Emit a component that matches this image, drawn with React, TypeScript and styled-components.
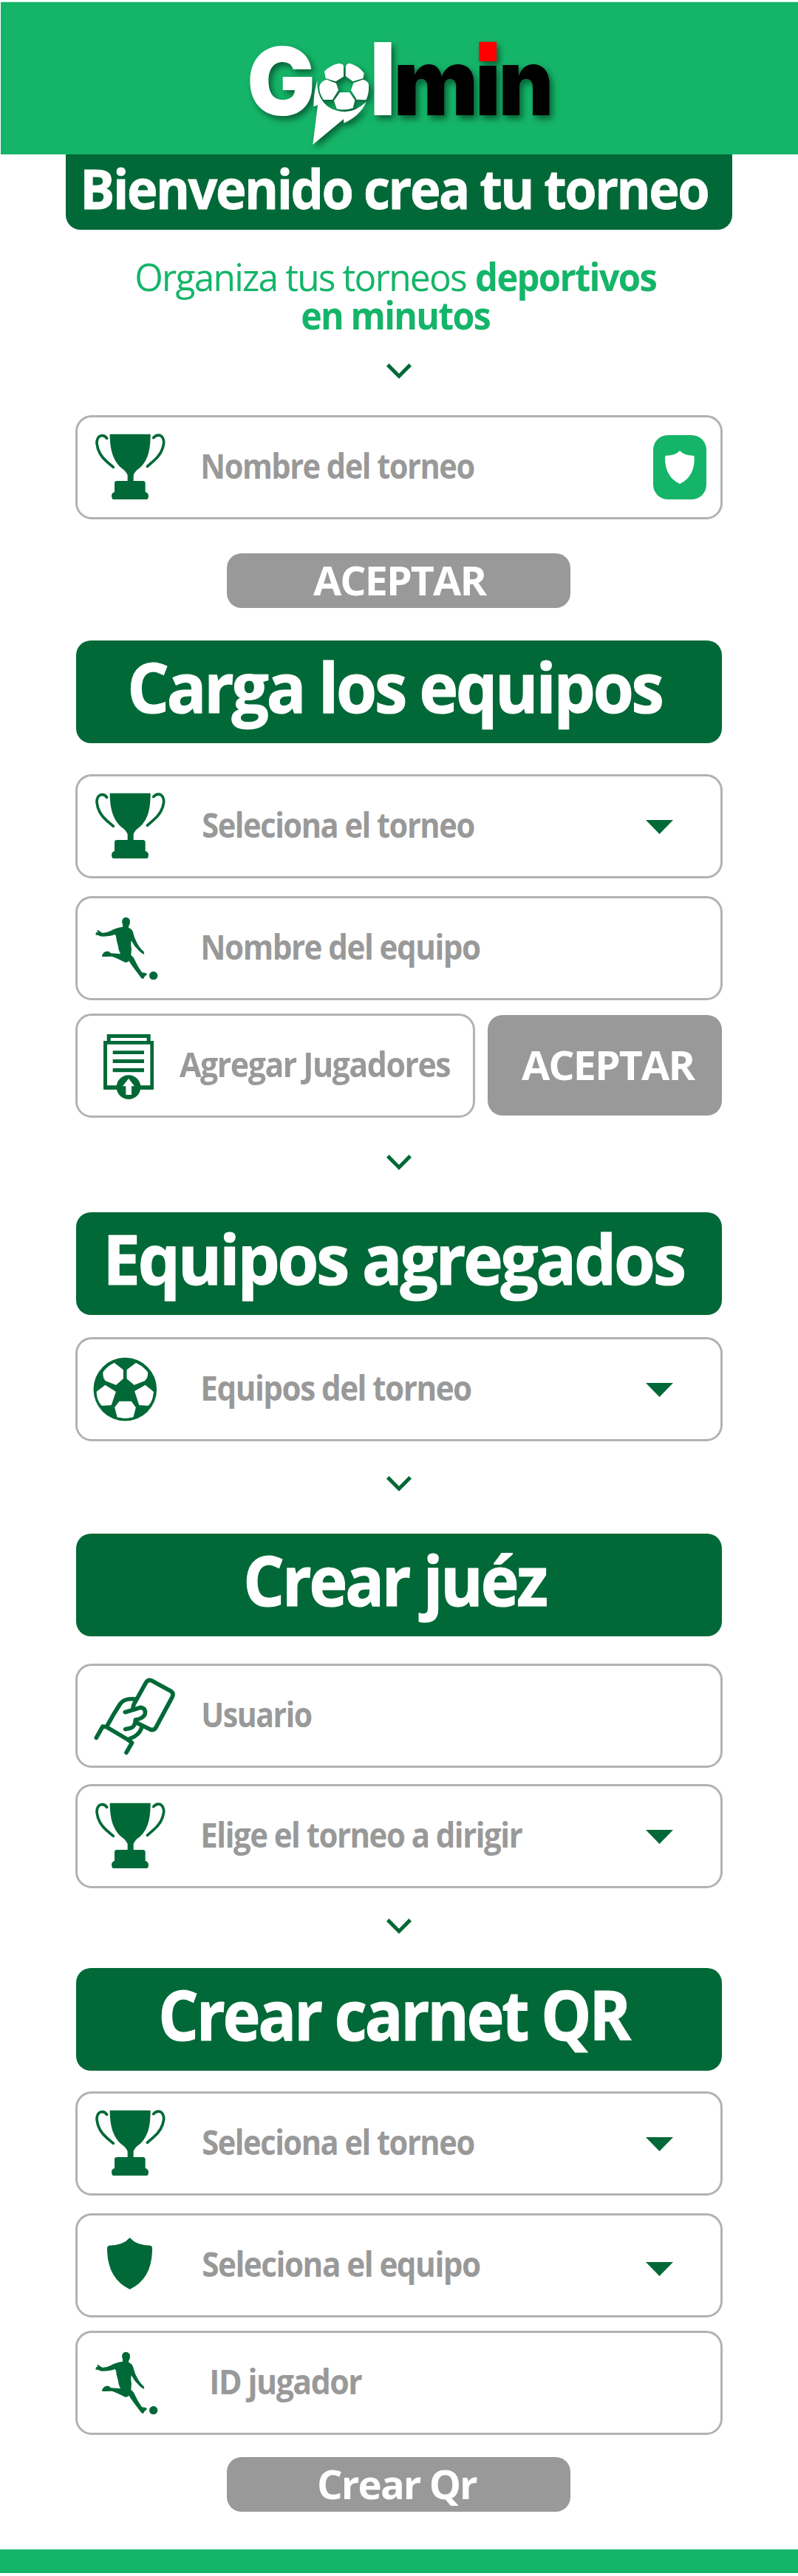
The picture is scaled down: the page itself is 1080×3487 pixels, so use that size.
import React from "react";
import styled, { createGlobalStyle } from "styled-components";

const colors = {
  bright: "#15b569",
  dark: "#006937",
  grey: "#999999",
  line: "#b2b2b2",
};

const GlobalStyle = createGlobalStyle`
  * { box-sizing: border-box; }
  body { margin: 0; background: #fff; }
`;

/* ---------- text fitted to a given ink width ---------- */

const FAMILY = '"Open Sans", "Noto Sans", sans-serif';
const TRACKING = -0.035;
const WORD_GAP = -0.005;

const measure = (text: string, font: string, letter = 0, word = 0) => {
  const ctx = document.createElement("canvas").getContext("2d")!;
  ctx.font = font;
  ctx.letterSpacing = `${letter}px`;
  ctx.wordSpacing = `${word}px`;
  const m = ctx.measureText(text);
  return {
    left: -m.actualBoundingBoxLeft,
    width: m.actualBoundingBoxRight + m.actualBoundingBoxLeft,
    ascent: m.actualBoundingBoxAscent,
    descent: m.actualBoundingBoxDescent,
  };
};

const FitBox = styled.span<{ $w: number; $size: number; $weight: number }>`
  display: block;
  flex: none;
  width: ${(p) => p.$w}px;
  height: ${(p) => p.$size}px;
  line-height: ${(p) => p.$size}px;
  font-family: ${FAMILY};
  font-size: ${(p) => p.$size}px;
  font-weight: ${(p) => p.$weight};
  letter-spacing: ${(p) => p.$size * TRACKING}px;
  word-spacing: ${(p) => p.$size * WORD_GAP}px;
  white-space: nowrap;
`;

const FitInner = styled.span`
  display: inline-block;
  transform-origin: 0 50%;
`;

type FitProps = { w: number; size: number; weight?: number; children: string };

const Fit = ({ w, size, weight = 700, children }: FitProps) => {
  const m = measure(children, `${weight} ${size}px ${FAMILY}`, size * TRACKING, size * WORD_GAP);
  const k = w / m.width;
  return (
    <FitBox $w={w} $size={size} $weight={weight}>
      <FitInner style={{ transform: `translateX(${-m.left * k}px) scaleX(${k})` }}>{children}</FitInner>
    </FitBox>
  );
};

/* ---------- logo ---------- */

const LogoSvg = styled.svg`
  display: block;
  filter: drop-shadow(4px 5px 4px rgba(0, 40, 20, 0.6));
`;

const LOGO_FONT = "Inter, sans-serif";

type LetterProps = {
  x: number;
  y: number;
  w: number;
  h: number;
  fill: string;
  like?: string;
  clip?: string;
  children: string;
};

const Letter = ({ x, y, w, h, fill, like, clip, children }: LetterProps) => {
  const m = measure(like ?? children, `900 200px ${LOGO_FONT}`);
  const sx = w / m.width;
  const sy = h / (m.ascent + m.descent);
  return (
    <g clipPath={clip}>
      <text
        transform={`translate(${x - m.left * sx} ${y + m.ascent * sy}) scale(${sx} ${sy})`}
        fontFamily={LOGO_FONT}
        fontWeight={900}
        fontSize={200}
        fill={fill}
      >
        {children}
      </text>
    </g>
  );
};

const Logo = () => (
  <LogoSvg width={480} height={206} viewBox="0 9 1440 618">
    <defs>
      <clipPath id="stem">
        <rect x="1030" y="258" width="100" height="230" />
      </clipPath>
    </defs>
    <Letter x={111} y={188} w={254} h={285} fill="#fff">G</Letter>
    <g fill="#fff">
      <path d="M385 327 Q370 380 370 433 L387 427 L367 587 L492 484 L493 500 Q560 470 584 413 Q545 452 498 454 Q440 452 410 415 Q382 380 385 327Z" />
      <path d="M414 290 Q440 262 476 257 L487 261 Q492 263 492 270 V311 L460 331 L419 318Z" />
      <path d="M501 269 Q503 259 516 257 Q552 266 575 297 L572 318 L530 331 L500 309Z" />
      <path d="M397 342 Q405 328 423 323 L462 338 L471 366 L447 405 H411 Q392 380 394 352Z" />
      <path d="M522 367 L532 337 L570 323 Q592 328 594 345 Q596 383 583 406 L545 404Z" />
      <path d="M477 375 H516 L538 407 L530 439 Q496 451 464 442 L453 409Z" />
    </g>
    <Letter x={615} y={170} w={72} h={298} fill="#fff">l</Letter>
    <Letter x={711} y={261} w={310} h={207} fill="#000">m</Letter>
    <Letter x={1042} y={266} w={71} h={202} fill="#000" like="ı" clip="url(#stem)">i</Letter>
    <rect x="1042" y="170" width="71" height="79" fill="#f00" />
    <Letter x={1137} y={261} w={191} h={207} fill="#000">n</Letter>
  </LogoSvg>
);

/* ---------- icons, all on the same 130 x 125 canvas ---------- */

const IconSvg = styled.svg.attrs({ width: 130, height: 125, viewBox: "0 0 390 375" })`
  flex: none;
  display: block;
  fill: ${colors.dark};
`;

const Trophy = () => (
  <IconSvg>
    <path d="M86 53 H251 C251 105 245 160 205 192 Q187 204 182 220 V243 H220 Q230 243 230 252 V288 Q243 292 243 304 Q243 315 238 318 H98 Q93 312 93 304 Q93 292 105 288 V252 Q105 243 115 243 H158 V220 Q152 204 135 192 C95 160 86 105 86 53Z" />
    <g fill="none" stroke={colors.dark} strokeWidth="11" strokeLinecap="round">
      <path d="M74 70 Q64 56 48 60 Q33 66 33 90 Q38 135 74 165 L100 187" />
      <path d="M263 68 Q274 54 290 58 Q306 66 305 90 Q300 132 262 163 L238 184" />
    </g>
  </IconSvg>
);

const Player = () => (
  <IconSvg>
    <g transform="translate(0 42)">
      <path d="M135 38 Q136 21 151 20 Q168 21 168 38 Q168 48 163 55 L162 62 Q178 68 181 84 Q188 112 203 136 Q212 150 224 160 L226 171 Q215 168 205 157 Q186 140 173 115 Q170 135 174 147 L172 174 Q182 180 188 195 Q198 218 216 244 L233 247 L237 252 Q226 260 222 270 Q214 270 207 258 L180 222 L163 197 Q158 205 148 203 Q120 188 95 179 Q70 180 54 180 Q55 168 63 162 Q72 157 82 159 L90 166 L129 169 Q121 155 119 135 L113 112 Q112 95 107 90 Q85 98 55 98 Q42 97 38 92 L28 92 L30 82 L38 81 L33 74 L39 72 Q46 80 56 83 Q72 84 88 76 Q110 62 138 59 Q140 52 135 38Z" />
      <circle cx="263" cy="257" r="17" />
    </g>
  </IconSvg>
);

const Sheet = () => (
  <IconSvg>
    <path fillRule="evenodd" d="M74 60 H251 V87 H264 V285 H60 V87 H74Z M89 75 V87 H236 V75Z M75 101 V268 H250 V101Z" />
    <path d="M98 127 H225 V141 H98Z M98 162 H225 V177 H98Z M98 198 H225 V214 H98Z" />
    <circle cx="162" cy="275" r="49" />
    <path fill="#fff" d="M162 240 L186 271 H174 V306 H151 V271 H138Z" />
  </IconSvg>
);

const Ball = () => (
  <IconSvg>
    <circle cx="148" cy="188" r="128.5" />
    <g fill="#fff" stroke="#fff" strokeWidth="3" strokeLinejoin="round">
      <path d="M104 82 L139 109 V145 L111 169 L68 152 Q58 140 60 118 Q75 95 104 82Z" />
      <path d="M192 82 L156 109 V145 L185 169 L228 152 Q240 140 239 118 Q220 94 192 82Z" />
      <path d="M67 172 L109 198 L91 251 L53 253 Q35 235 33 198Z" />
      <path d="M230 172 L188 196 L206 251 L242 253 Q260 235 262 198Z" />
      <path d="M125 238 H173 L190 262 L180 300 Q148 309 117 300 L107 261Z" />
    </g>
  </IconSvg>
);

const RefereeHand = () => (
  <IconSvg>
    <g fill="none" stroke={colors.dark} strokeWidth="17" strokeLinecap="round" strokeLinejoin="round">
      <path d="M180 153 Q182 140 192 126 L233 52 Q242 39 256 45 L334 88 Q347 96 339 112 L273 235 Q265 249 250 243 L192 215" />
      <path d="M190 120 Q145 115 128 139 Q102 178 76 227" />
      <path d="M31 277 L57 231 L72 233 L158 284 L176 297 L153 337" />
      <path d="M148 173 L212 154 Q233 158 229 180 Q223 199 190 204 Q189 232 170 238 L149 242" />
      <path d="M216 234 Q205 268 168 280" />
    </g>
  </IconSvg>
);

const SHIELD = "M92 0 Q118 31 176 32 Q183 33 183 44 Q184 166 92 210 Q0 166 0 44 Q0 33 8 32 Q66 31 92 0Z";

const Shield = () => (
  <IconSvg>
    <path transform="translate(75 75)" d={SHIELD} />
  </IconSvg>
);

const icons = { trophy: Trophy, player: Player, sheet: Sheet, ball: Ball, hand: RefereeHand, shield: Shield };

/* ---------- layout ---------- */

const Page = styled.main`
  width: 1080px;
  height: 3487px;
  padding-top: 2px;
  display: flex;
  flex-direction: column;
  align-items: center;
  background: #fff;
`;

const TopBar = styled.header`
  width: 1079px;
  height: 207px;
  flex: none;
  align-self: flex-end;
  display: flex;
  justify-content: center;
  border-top: 1px solid #c4ebd7;
  background: ${colors.bright};
`;

const Welcome = styled.h1`
  width: 902px;
  height: 102px;
  flex: none;
  margin: 0;
  padding: 0 8px 11px 0;
  display: flex;
  align-items: center;
  justify-content: center;
  border-radius: 0 0 20px 20px;
  background: ${colors.dark};
  color: #fff;
  -webkit-text-stroke: 0.8px #fff;
`;

const Tagline = styled.div`
  width: 711px;
  margin-top: 37px;
  padding-right: 8px;
  display: flex;
  flex-wrap: wrap;
  justify-content: center;
  gap: 0 14px;
  color: ${colors.bright};
`;

const ChevronSvg = styled.svg<{ $mt: number }>`
  flex: none;
  display: block;
  margin-top: ${(p) => p.$mt}px;
  fill: ${colors.dark};
`;

const Chevron = ({ mt }: { mt: number }) => (
  <ChevronSvg $mt={mt} width={34} height={21} viewBox="0 0 34 21">
    <path d="M3.5 0 L17 13.7 L30.5 0 L34 3.7 L17 20.7 L0 3.7Z" />
  </ChevronSvg>
);

const Heading = styled.h2<{ $mt: number }>`
  width: 874px;
  height: 139px;
  flex: none;
  margin: ${(p) => p.$mt}px 0 0;
  padding: 0 7px 14px 0;
  display: flex;
  align-items: center;
  justify-content: center;
  border-radius: 20px;
  background: ${colors.dark};
  color: #fff;
  -webkit-text-stroke: 1.2px #fff;
`;

const FieldBox = styled.div<{ $mt: number; $w: number }>`
  width: ${(p) => p.$w}px;
  height: 141px;
  flex: none;
  margin-top: ${(p) => p.$mt}px;
  padding-left: 15px;
  display: flex;
  align-items: center;
  border: 3px solid ${colors.line};
  border-radius: 22px;
  background: #fff;
`;

const Label = styled.div<{ $gap: number }>`
  margin-left: ${(p) => p.$gap}px;
  padding-bottom: 4px;
  color: ${colors.grey};
`;

const CaretSvg = styled.svg<{ $drop: number }>`
  display: block;
  margin: ${(p) => p.$drop}px 64px 0 auto;
  fill: ${colors.dark};
`;

const Badge = styled.div`
  width: 72px;
  height: 87px;
  margin: 0 19px 0 auto;
  display: flex;
  align-items: center;
  justify-content: center;
  border-radius: 20px;
  background: ${colors.bright};
  fill: #fff;
`;

const Button = styled.button<{ $mt: number; $w: number; $h: number; $shift?: number }>`
  width: ${(p) => p.$w}px;
  height: ${(p) => p.$h}px;
  flex: none;
  margin: ${(p) => p.$mt}px 2px 0 0;
  padding: 0 0 2px ${(p) => p.$shift ?? 0}px;
  display: flex;
  align-items: center;
  justify-content: center;
  border: 0;
  border-radius: 20px;
  background: ${colors.grey};
  color: #fff;
`;

const Row = styled.div`
  width: 876px;
  margin-top: 18px;
  display: flex;
  gap: 17px;
`;

const Footer = styled.footer`
  width: 100%;
  height: 32px;
  flex: none;
  margin-top: 51px;
  background: ${colors.bright};
`;

type FieldProps = {
  icon: keyof typeof icons;
  text: string;
  w: number;
  mt?: number;
  boxWidth?: number;
  gap?: number;
  caret?: boolean;
  drop?: number;
  badge?: boolean;
};

const Field = ({ icon, text, w, mt = 0, boxWidth = 876, gap = 24.5, caret, drop = 1, badge }: FieldProps) => {
  const Icon = icons[icon];
  return (
    <FieldBox $mt={mt} $w={boxWidth}>
      <Icon />
      <Label $gap={gap}>
        <Fit w={w} size={45.7}>{text}</Fit>
      </Label>
      {caret && (
        <CaretSvg $drop={drop} width={37} height={19} viewBox="0 0 37 19">
          <path d="M0 0 H37 L18.5 19Z" />
        </CaretSvg>
      )}
      {badge && (
        <Badge>
          <svg width="40" height="45" viewBox="0 0 184 210" preserveAspectRatio="none">
            <path d={SHIELD} />
          </svg>
        </Badge>
      )}
    </FieldBox>
  );
};

export default function App() {
  return (
    <>
      <GlobalStyle />
      <Page>
        <TopBar>
          <Logo />
        </TopBar>
        <Welcome>
          <Fit w={844} size={74}>Bienvenido crea tu torneo</Fit>
        </Welcome>
        <Tagline>
          <Fit w={446} size={52} weight={400}>Organiza tus torneos</Fit>
          <Fit w={243} size={52}>deportivos</Fit>
          <Fit w={254} size={52}>en minutos</Fit>
        </Tagline>
        <Chevron mt={40} />
        <Field mt={49} icon="trophy" text="Nombre del torneo" w={367} badge />
        <Button $mt={46} $w={465} $h={74}>
          <Fit w={236} size={54.6}>ACEPTAR</Fit>
        </Button>

        <Heading $mt={44}>
          <Fit w={719} size={92.4}>Carga los equipos</Fit>
        </Heading>
        <Field mt={42} icon="trophy" text="Seleciona el torneo" w={367} caret />
        <Field mt={24} icon="player" text="Nombre del equipo" w={375} />
        <Row>
          <Field icon="sheet" text="Agregar Jugadores" w={366} boxWidth={541} gap={-7} />
          <Button $mt={2} $w={317} $h={136} $shift={4}>
            <Fit w={236} size={54.6}>ACEPTAR</Fit>
          </Button>
        </Row>
        <Chevron mt={50} />

        <Heading $mt={57}>
          <Fit w={779} size={92.4}>Equipos agregados</Fit>
        </Heading>
        <Field mt={30} icon="ball" text="Equipos del torneo" w={363} caret />
        <Chevron mt={47} />

        <Heading $mt={57}>
          <Fit w={406} size={92.4}>Crear juéz</Fit>
        </Heading>
        <Field mt={37} icon="hand" text="Usuario" w={147} />
        <Field mt={22} icon="trophy" text="Elige el torneo a dirigir" w={432} caret />
        <Chevron mt={41} />

        <Heading $mt={46}>
          <Fit w={635} size={92.4}>Crear carnet QR</Fit>
        </Heading>
        <Field mt={28} icon="trophy" text="Seleciona el torneo" w={367} caret />
        <Field mt={24} icon="shield" text="Seleciona el equipo" w={375} caret drop={9} />
        <Field mt={18} icon="player" text="ID jugador" w={203} gap={37} />
        <Button $mt={30} $w={465} $h={74}>
          <Fit w={214} size={54.6}>Crear Qr</Fit>
        </Button>
        <Footer />
      </Page>
    </>
  );
}
